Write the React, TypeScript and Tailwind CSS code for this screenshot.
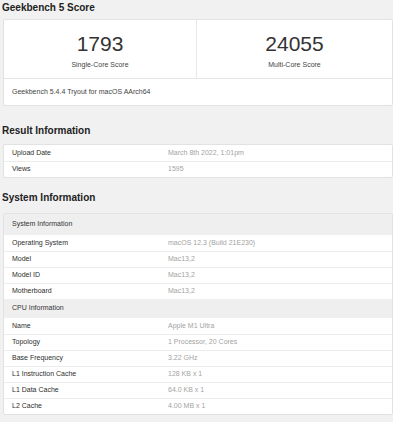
import React from "react";

const font = { fontFamily: '"Liberation Sans", Arial, sans-serif' };

type Row = { label: string; value?: string; header?: boolean };

const resultRows: Row[] = [
    { label: "Upload Date", value: "March 8th 2022, 1:01pm" },
    { label: "Views", value: "1595" },
];

const systemRows: Row[] = [
    { label: "System Information", header: true },
    { label: "Operating System", value: "macOS 12.3 (Build 21E230)" },
    { label: "Model", value: "Mac13,2" },
    { label: "Model ID", value: "Mac13,2" },
    { label: "Motherboard", value: "Mac13,2" },
    { label: "CPU Information", header: true },
    { label: "Name", value: "Apple M1 Ultra" },
    { label: "Topology", value: "1 Processor, 20 Cores" },
    { label: "Base Frequency", value: "3.22 GHz" },
    { label: "L1 Instruction Cache", value: "128 KB x 1" },
    { label: "L1 Data Cache", value: "64.0 KB x 1" },
    { label: "L2 Cache", value: "4.00 MB x 1" },
];

function InfoTable({ rows }: { rows: Row[] }) {
    return (
        <div className="bg-white border border-[#e2e2e2] rounded-[2px] ml-[3px]">
            {rows.map((r, i) =>
                r.header ? (
                    <div
                        key={i}
                        className={`flex items-center px-[8px] bg-[#efefef] text-[7px] text-[#333] ${i === 0 ? "h-[21px]" : "h-[19px]"}`}
                    >
                        {r.label}
                    </div>
                ) : (
                    <div
                        key={i}
                        className={`flex items-center h-[16px] px-[8px] text-[7px] ${i > 0 && !rows[i - 1].header ? "border-t border-[#ececec]" : ""}`}
                    >
                        <div className="w-[156px] text-[#2e2e2e]">{r.label}</div>
                        <div className="text-[#a3a3a3]">{r.value}</div>
                    </div>
                )
            )}
        </div>
    );
}

export default function App() {
    return (
        <div className="w-[393px] h-[422px] overflow-hidden bg-[#f1f1f1]" style={font}>
            {/* Score */}
            <div className="h-[19px] pl-[2px] pt-[1px] text-[10px] leading-[14px] font-bold text-[#222]">
                Geekbench 5 Score
            </div>
            <div className="bg-white border border-[#e2e2e2] rounded-[2px] ml-[3px]">
                <div className="flex h-[59px] border-b border-[#e6e6e6]">
                    <div className="w-[193px] border-r border-[#e8e8e8] flex flex-col items-center pt-[12px]">
                        <div className="text-[21px] leading-[23px] text-[#333]">1793</div>
                        <div className="mt-[6px] text-[7px] leading-[8px] text-[#444]">Single-Core Score</div>
                    </div>
                    <div className="flex-1 flex flex-col items-center pt-[12px]">
                        <div className="text-[21px] leading-[23px] text-[#333]">24055</div>
                        <div className="mt-[6px] text-[7px] leading-[8px] text-[#444]">Multi-Core Score</div>
                    </div>
                </div>
                <div className="h-[26px] flex items-center px-[8px] text-[7px] text-[#444]">
                    Geekbench 5.4.4 Tryout for macOS AArch64
                </div>
            </div>

            {/* Result */}
            <div className="mt-[18px] h-[20px] pl-[2px] text-[10px] leading-[14px] font-bold text-[#222]">
                Result Information
            </div>
            <InfoTable rows={resultRows} />

            {/* System */}
            <div className="mt-[13px] h-[22px] pl-[2px] text-[10px] leading-[14px] font-bold text-[#222]">
                System Information
            </div>
            <InfoTable rows={systemRows} />
        </div>
    );
}
